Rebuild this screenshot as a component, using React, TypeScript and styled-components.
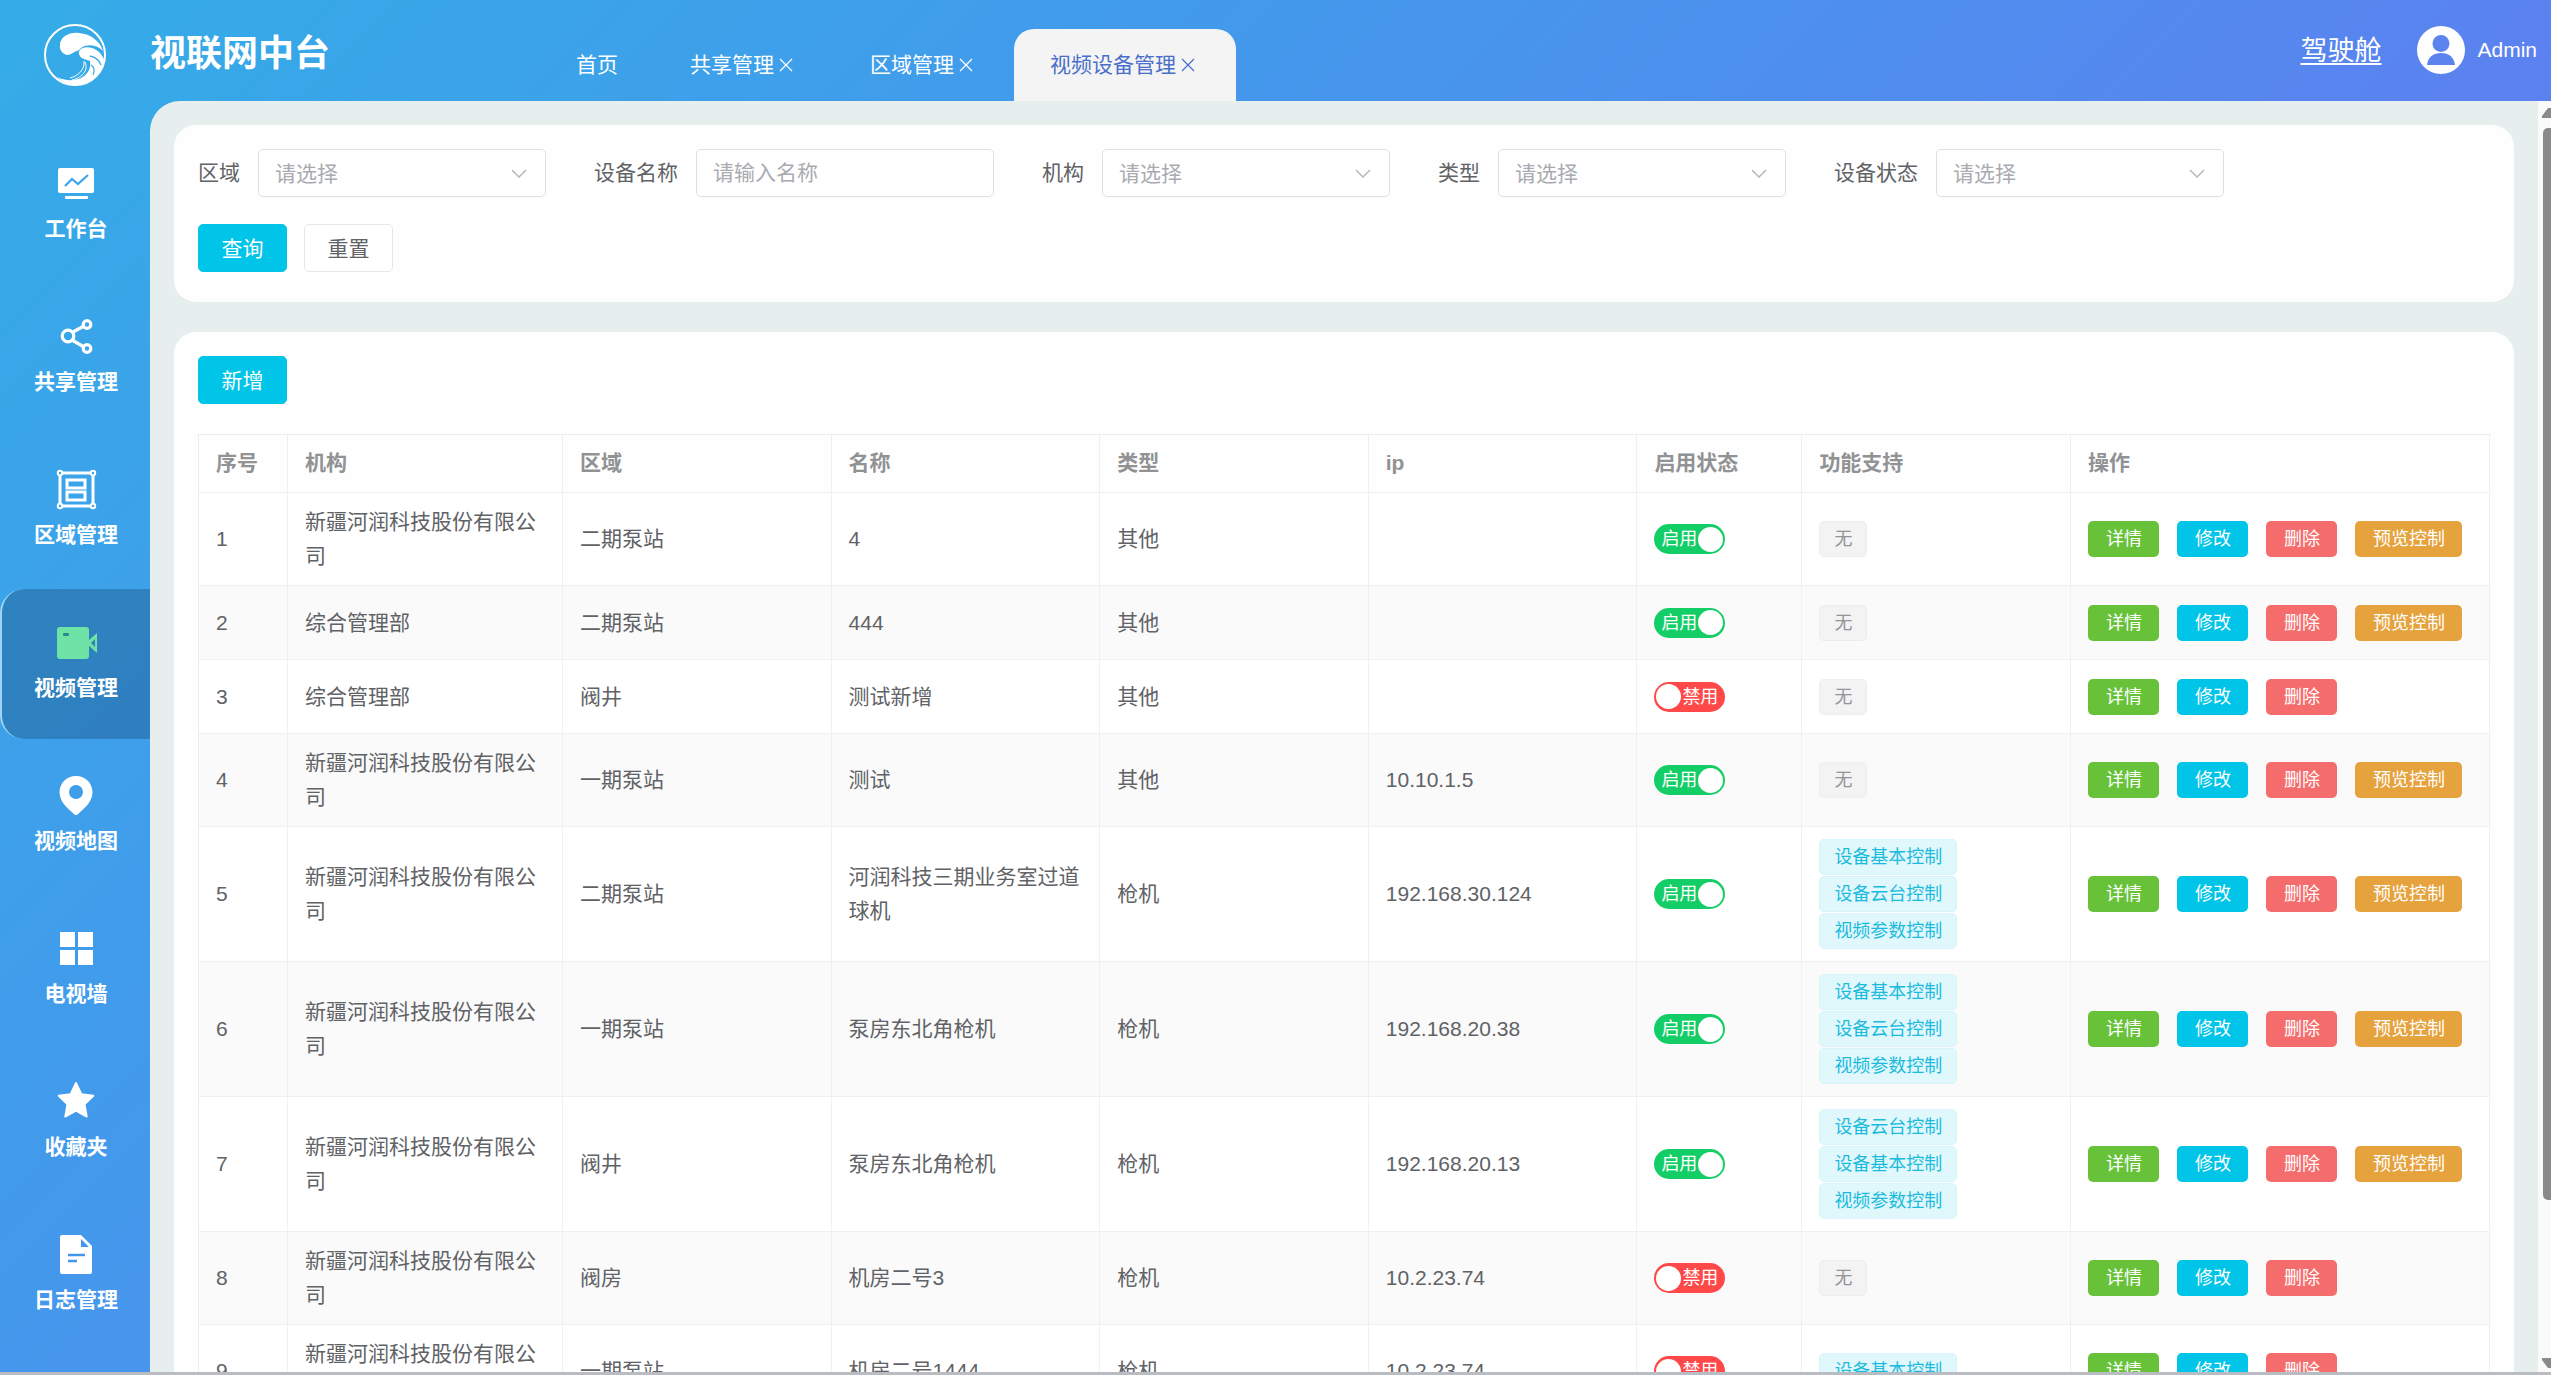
import React, { useState } from "react";
import styled, { createGlobalStyle, css } from "styled-components";

const Global = createGlobalStyle`
  *, *::before, *::after { box-sizing: border-box; }
  body {
    margin: 0;
    font-family: "Liberation Sans", "Noto Sans CJK SC", sans-serif;
    font-size: 21px;
    color: #606266;
  }
  button, input, select { font: inherit; }
`;

const Shell = styled.div`
  display: flex;
  flex-direction: column;
  height: 100vh;
  overflow: hidden;
  border-bottom: 3px solid #b9bcc2;
  background: linear-gradient(135deg, #34ace7 0%, #4498ec 34%, #5b82f0 66%, #6a74f2 100%);
`;

/* ---------- header ---------- */

const Header = styled.header`
  display: flex;
  flex: none;
  height: 101px;
  color: #fff;
`;

const Brand = styled.div`
  display: flex;
  flex: none;
  width: 540px;
  padding-top: 8px;
`;

const LogoBox = styled.div`
  display: flex;
  justify-content: center;
  width: 150px;
  padding-top: 15px;
`;

const Title = styled.h1`
  margin: 0;
  padding-top: 16px;
  font-size: 36px;
  line-height: 60px;
  font-weight: 700;
`;

const Tabs = styled.nav`
  display: flex;
  flex: 1;
  align-items: flex-end;
`;

const Tab = styled.div<{ $active?: boolean }>`
  display: flex;
  align-items: center;
  height: 72px;
  padding: 0 36px;
  border-radius: 20px 20px 0 0;
  ${(p) =>
    p.$active &&
    css`
      background: #f4f4f4;
      color: #4a6fcb;
    `}
`;

const TabLink = styled.a`
  color: inherit;
  text-decoration: none;
  line-height: 30px;
`;

const TabClose = styled.button`
  display: flex;
  align-items: center;
  justify-content: center;
  width: 24px;
  height: 24px;
  padding: 0;
  border: 0;
  background: none;
  color: inherit;
`;

const Account = styled.div`
  display: flex;
  align-items: center;
  height: 100px;
  padding-right: 14px;
`;

const Cockpit = styled.a`
  margin-right: 36px;
  padding-top: 2px;
  color: #fff;
  font-size: 27px;
  line-height: 36px;
  text-decoration: underline;
  text-decoration-thickness: 2px;
  text-underline-offset: 3px;
`;

const UserName = styled.span`
  margin-left: 12px;
`;

/* ---------- body ---------- */

const Body = styled.div`
  display: flex;
  flex: 1;
  min-height: 0;
`;

const Sidebar = styled.nav`
  display: flex;
  flex: none;
  flex-direction: column;
  gap: 3px;
  width: 150px;
  padding-top: 29px;
`;

const SideItem = styled.a<{ $active?: boolean }>`
  display: flex;
  flex: none;
  flex-direction: column;
  align-items: center;
  gap: 10px;
  height: 150px;
  padding-top: 34px;
  border-left: 2px solid transparent;
  color: #fff;
  font-weight: 700;
  line-height: 30px;
  text-decoration: none;
  ${(p) =>
    p.$active &&
    css`
      border-left-color: #9fd4f7;
      border-radius: 24px 0 0 24px;
      background: rgba(20, 68, 110, 0.34);
      svg { color: #6fe3a5; }
    `}
`;

const Main = styled.main`
  display: flex;
  flex: 1;
  min-width: 0;
  overflow: hidden;
  border-top-left-radius: 30px;
  background: #e6efed;
`;

const Scroller = styled.div`
  display: flex;
  flex: 1;
  flex-direction: column;
  gap: 30px;
  min-width: 0;
  padding: 24px 24px 0;
  overflow: hidden;
`;

const Card = styled.section`
  flex: none;
  padding: 24px 24px 30px;
  border-radius: 22px;
  background: #fefefe;
`;

const ScrollBar = styled.div`
  display: flex;
  flex: none;
  flex-direction: column;
  align-items: flex-end;
  width: 13px;
  padding: 6px 0 3px;
  background: #fafafa;
  color: #8a8a8a;
  svg { display: block; flex: none; }
`;

const Thumb = styled.div`
  flex: 1072 0 0;
  width: 8px;
  margin-top: 10px;
  border-radius: 5px 0 0 5px;
  background: #8a8a8a;
`;

const TrackRest = styled.div`
  flex: 158 0 0;
`;

/* ---------- filter form ---------- */

const Filters = styled.form`
  display: flex;
  flex-wrap: wrap;
  gap: 27px 48px;
`;

const Field = styled.div`
  display: flex;
  align-items: center;
  gap: 18px;
`;

const Label = styled.label`
  line-height: 48px;
`;

const controlBox = css`
  height: 48px;
  padding: 0 16px;
  border: 1px solid #dcdfe6;
  border-radius: 5px;
  background: #fff;
  color: #a9abb0;
  outline: none;
`;

const SelectWrap = styled.div`
  display: grid;
  align-items: center;
  width: 288px;
  > * { grid-area: 1 / 1; }
  svg { justify-self: end; margin-right: 19px; pointer-events: none; color: #b4b7bd; }
`;

const Select = styled.select`
  ${controlBox}
  width: 100%;
  appearance: none;
`;

const Input = styled.input`
  ${controlBox}
  width: 298px;
  &::placeholder { color: #a9abb0; opacity: 1; }
`;

const FormActions = styled.div`
  display: flex;
  flex-basis: 100%;
  gap: 17px;
`;

const Button = styled.button<{ $primary?: boolean }>`
  width: 89px;
  height: 48px;
  padding: 0 0 2px;
  border: 1px solid ${(p) => (p.$primary ? "#00c4e8" : "#e4e6ea")};
  border-radius: 5px;
  background: ${(p) => (p.$primary ? "#00c4e8" : "#fff")};
  color: ${(p) => (p.$primary ? "#fff" : "#606266")};
`;

/* ---------- table ---------- */

const Table = styled.table`
  width: 100%;
  margin-top: 30px;
  table-layout: fixed;
  border-collapse: separate;
  border-spacing: 0;
  border-top: 1px solid #ececee;
  border-left: 1px solid #ececee;
`;

const Col = styled.col<{ $w?: number }>`
  width: ${(p) => (p.$w ? p.$w + "px" : "auto")};
`;

const cell = css`
  padding: 12px 14px 12px 17px;
  border-right: 1px solid #f0f0f1;
  border-bottom: 1px solid #f0f0f1;
  line-height: 34px;
  text-align: left;
  vertical-align: middle;
`;

const Th = styled.th`
  ${cell}
  height: 58px;
  padding-top: 10px;
  color: #909294;
`;

const Td = styled.td`
  ${cell}
  height: 74px;
`;

const Row = styled.tr`
  background: #fff;
  &:nth-child(even) { background: #fafafa; }
`;

const TagList = styled.div`
  display: flex;
  flex-direction: column;
  align-items: flex-start;
  gap: 1px;
`;

const Tag = styled.span<{ $muted?: boolean }>`
  padding: 0 14px;
  border: 1px solid ${(p) => (p.$muted ? "#ededee" : "#d6f4f9")};
  border-radius: 5px;
  background: ${(p) => (p.$muted ? "#f3f3f4" : "#e0f8fc")};
  color: ${(p) => (p.$muted ? "#929497" : "#1cbbdd")};
  font-size: 18px;
  line-height: 34px;
`;

const Actions = styled.div`
  display: flex;
  gap: 18px;
`;

const tones = { green: "#67c23a", cyan: "#00c4e8", red: "#f56c6c", amber: "#e6a23c" };

const RowButton = styled.button<{ $tone: keyof typeof tones }>`
  height: 36px;
  padding: 0 17px 0 18px;
  border: 0;
  border-radius: 5px;
  background: ${(p) => tones[p.$tone]};
  color: #fff;
  font-size: 18px;
  line-height: 36px;
  white-space: nowrap;
`;

const SwitchLabel = styled.label<{ $on: boolean }>`
  display: flex;
  align-items: center;
  justify-content: space-between;
  flex-direction: ${(p) => (p.$on ? "row" : "row-reverse")};
  width: 71px;
  height: 30px;
  padding: ${(p) => (p.$on ? "0 2px 0 7px" : "0 7px 0 2px")};
  border-radius: 15px;
  background: ${(p) => (p.$on ? "#13ce66" : "#ff4949")};
  color: #fff;
  font-size: 18px;
  line-height: 30px;
`;

const SwitchInput = styled.input`
  appearance: none;
  flex: none;
  width: 25px;
  height: 25px;
  margin: 0;
  border-radius: 50%;
  background: #fff;
`;

/* ---------- drawings ---------- */

const Logo = () => (
  <svg width="64" height="64" viewBox="0 0 64 64" fill="none" aria-hidden="true">
    <circle cx="32" cy="32" r="30" stroke="#fff" strokeWidth="2" />
    <path
      fill="#fff"
      d="M17 22c0-8 9-13 19-12 12 1 21 8 24 18-5-5-11-7-18-5-4 1-5 4-8 5-4 1-6 4-10 4-4-1-8-5-7-10z"
    />
    <path
      fill="#fff"
      d="M36 31c-1-5 6-8 13-6 6 2 10 6 12 12-1 10-9 20-20 24-10 3-20 0-27-7 8 4 17 4 24 1 7-4 10-9 9-17l-3-1c-3-1-7-2-8-6z"
    />
    <path d="M47 33c5 1 9 4 11 9M48 42c3 2 4 6 2 10" stroke="#3aa9e8" strokeWidth="1.3" />
    <path d="M42 39c4 9-4 16-13 18M41 38c1 9-6 15-14 17" stroke="#fff" strokeWidth="1" />
  </svg>
);

const Avatar = () => (
  <svg width="48" height="48" viewBox="0 0 48 48" aria-hidden="true">
    <circle cx="24" cy="24" r="24" fill="#fff" />
    <circle cx="24" cy="17.500" r="8.500" fill="#5b84ef" />
    <path d="M10 39c1-8 6-12 14-12s13 4 14 12z" fill="#5b84ef" />
  </svg>
);

const Cross = () => (
  <svg width="14" height="14" viewBox="0 0 14 14" fill="none" stroke="currentColor" strokeWidth="1.3" aria-hidden="true">
    <path d="M1 1l12 12M13 1L1 13" />
  </svg>
);

const Chevron = () => (
  <svg width="16" height="9" viewBox="0 0 16 9" fill="none" stroke="currentColor" strokeWidth="1.500" aria-hidden="true">
    <path d="M1 1l7 7 7-7" />
  </svg>
);

const glyphs: Record<string, React.ReactNode> = {
  monitor: (
    <>
      <path
        fill="currentColor"
        d="M4 4h32a2 2 0 0 1 2 2v21a2 2 0 0 1-2 2H4a2 2 0 0 1-2-2V6a2 2 0 0 1 2-2z"
      />
      <path d="M9 22l7-7 6 5 10-9" stroke="#3ba5e8" strokeWidth="2.200" fill="none" />
      <rect x="9" y="32" width="23" height="3" rx="1" fill="currentColor" />
    </>
  ),
  share: (
    <g fill="none" stroke="currentColor" strokeWidth="3.200">
      <circle cx="12" cy="19" r="5.800" />
      <circle cx="31" cy="7.500" r="3.800" />
      <circle cx="31" cy="31.500" r="3.800" />
      <path d="M17 15l11-6M16 23l12 7" />
    </g>
  ),
  area: (
    <g fill="none" stroke="currentColor">
      <path d="M4 3h33v33H4z" strokeWidth="3" />
      <path d="M14 18h-3M11 10h18v8H11z" strokeWidth="3" />
      <path d="M11 22h18v8H11z" strokeWidth="3" />
      <g fill="#3f9fea" strokeWidth="2">
        <circle cx="4" cy="3" r="2.200" />
        <circle cx="37" cy="3" r="2.200" />
        <circle cx="4" cy="36" r="2.200" />
        <circle cx="37" cy="36" r="2.200" />
      </g>
    </g>
  ),
  video: (
    <>
      <rect x="1" y="4" width="32" height="32" rx="3" fill="currentColor" />
      <path d="M32 18l9-8v20l-9-8z" fill="currentColor" />
      <path d="M35 20l4-4v8z" fill="#3480bd" />
      <rect x="7" y="10" width="6" height="3" rx="1" fill="#2f8a8f" />
    </>
  ),
  pin: (
    <path
      fill="currentColor"
      fillRule="evenodd"
      d="M20 0c9.500 0 16.500 7 16.500 16.500C36.500 27 25 35 21.500 38.500q-1.500 1-3 0C15 35 3.500 27 3.500 16.500 3.500 7 10.500 0 20 0zm0 9a7 7 0 1 0 0 14 7 7 0 0 0 0-14z"
    />
  ),
  grid: <path fill="currentColor" d="M4 3h15v15H4zM22 3h15v15H22zM4 21h15v15H4zM22 21h15v15H22z" />,
  star: (
    <path
      fill="currentColor"
      stroke="currentColor"
      strokeWidth="2"
      strokeLinejoin="round"
      d="M20 1l5.300 11.200 12 1.600-8.800 8.500 2.200 12.200L20 28.600 9.300 34.500l2.200-12.200-8.800-8.500 12-1.600z"
    />
  ),
  doc: (
    <>
      <path fill="currentColor" d="M6 0h19l11 11v26a2 2 0 0 1-2 2H6a2 2 0 0 1-2-2V2a2 2 0 0 1 2-2z" />
      <path d="M25 4v8h8z" fill="#4496ec" />
      <path d="M12 20h17M12 26h9" stroke="#4496ec" strokeWidth="2.500" />
    </>
  ),
};

const SideIcon = ({ name }: { name: string }) => (
  <svg width="40" height="40" viewBox="0 0 40 40" overflow="visible" aria-hidden="true">
    {glyphs[name]}
  </svg>
);

/* ---------- data ---------- */

const menu = [
  { icon: "monitor", text: "工作台" },
  { icon: "share", text: "共享管理" },
  { icon: "area", text: "区域管理" },
  { icon: "video", text: "视频管理", active: true },
  { icon: "pin", text: "视频地图" },
  { icon: "grid", text: "电视墙" },
  { icon: "star", text: "收藏夹" },
  { icon: "doc", text: "日志管理" },
];

const tabs = [
  { text: "首页", fixed: true },
  { text: "共享管理" },
  { text: "区域管理" },
  { text: "视频设备管理", active: true },
];

const filters = [
  { id: "region", text: "区域" },
  { id: "name", text: "设备名称", hint: "请输入名称" },
  { id: "org", text: "机构" },
  { id: "type", text: "类型" },
  { id: "status", text: "设备状态" },
];

const columns = [
  { text: "序号", w: 89 },
  { text: "机构", w: 275 },
  { text: "区域" },
  { text: "名称" },
  { text: "类型" },
  { text: "ip" },
  { text: "启用状态", w: 165 },
  { text: "功能支持" },
  { text: "操作", w: 419 },
];

const HERUN = "新疆河润科技股份有限公司";
const ADMIN_DEPT = "综合管理部";
const BASIC = "设备基本控制";
const PTZ = "设备云台控制";
const VIDEO = "视频参数控制";

type Device = {
  org: string;
  area: string;
  name: string;
  type: string;
  ip: string;
  on: boolean;
  features: string[];
};

const devices: Device[] = [
  { org: HERUN, area: "二期泵站", name: "4", type: "其他", ip: "", on: true, features: [] },
  { org: ADMIN_DEPT, area: "二期泵站", name: "444", type: "其他", ip: "", on: true, features: [] },
  { org: ADMIN_DEPT, area: "阀井", name: "测试新增", type: "其他", ip: "", on: false, features: [] },
  { org: HERUN, area: "一期泵站", name: "测试", type: "其他", ip: "10.10.1.5", on: true, features: [] },
  { org: HERUN, area: "二期泵站", name: "河润科技三期业务室过道球机", type: "枪机", ip: "192.168.30.124", on: true, features: [BASIC, PTZ, VIDEO] },
  { org: HERUN, area: "一期泵站", name: "泵房东北角枪机", type: "枪机", ip: "192.168.20.38", on: true, features: [BASIC, PTZ, VIDEO] },
  { org: HERUN, area: "阀井", name: "泵房东北角枪机", type: "枪机", ip: "192.168.20.13", on: true, features: [PTZ, BASIC, VIDEO] },
  { org: HERUN, area: "阀房", name: "机房二号3", type: "枪机", ip: "10.2.23.74", on: false, features: [] },
  { org: HERUN, area: "一期泵站", name: "机房二号1444", type: "枪机", ip: "10.2.23.74", on: false, features: [BASIC] },
];

const DeviceRow = ({ device, index }: { device: Device; index: number }) => {
  const [on, setOn] = useState(device.on);
  return (
    <Row>
      <Td>{index + 1}</Td>
      <Td>{device.org}</Td>
      <Td>{device.area}</Td>
      <Td>{device.name}</Td>
      <Td>{device.type}</Td>
      <Td>{device.ip}</Td>
      <Td>
        <SwitchLabel $on={on}>
          {on ? "启用" : "禁用"}
          <SwitchInput type="checkbox" role="switch" checked={on} onChange={() => setOn(!on)} />
        </SwitchLabel>
      </Td>
      <Td>
        <TagList>
          {device.features.length ? device.features.map((f) => <Tag key={f}>{f}</Tag>) : <Tag $muted>无</Tag>}
        </TagList>
      </Td>
      <Td>
        <Actions>
          <RowButton $tone="green">详情</RowButton>
          <RowButton $tone="cyan">修改</RowButton>
          <RowButton $tone="red">删除</RowButton>
          {on && <RowButton $tone="amber">预览控制</RowButton>}
        </Actions>
      </Td>
    </Row>
  );
};

export default function App() {
  return (
    <>
      <Global />
      <Shell>
        <Header>
          <Brand>
            <LogoBox>
              <Logo />
            </LogoBox>
            <Title>视联网中台</Title>
          </Brand>
          <Tabs>
            {tabs.map((t) => (
              <Tab key={t.text} $active={t.active}>
                <TabLink href="#">{t.text}</TabLink>
                {!t.fixed && (
                  <TabClose aria-label={"关闭" + t.text}>
                    <Cross />
                  </TabClose>
                )}
              </Tab>
            ))}
          </Tabs>
          <Account>
            <Cockpit href="#">驾驶舱</Cockpit>
            <Avatar />
            <UserName>Admin</UserName>
          </Account>
        </Header>
        <Body>
          <Sidebar>
            {menu.map((m) => (
              <SideItem key={m.text} href="#" $active={m.active}>
                <SideIcon name={m.icon} />
                {m.text}
              </SideItem>
            ))}
          </Sidebar>
          <Main>
            <Scroller>
              <Card>
                <Filters onSubmit={(e) => e.preventDefault()}>
                  {filters.map((f) => (
                    <Field key={f.id}>
                      <Label htmlFor={f.id}>{f.text}</Label>
                      {f.hint ? (
                        <Input id={f.id} placeholder={f.hint} />
                      ) : (
                        <SelectWrap>
                          <Select id={f.id}>
                            <option>请选择</option>
                          </Select>
                          <Chevron />
                        </SelectWrap>
                      )}
                    </Field>
                  ))}
                  <FormActions>
                    <Button type="submit" $primary>
                      查询
                    </Button>
                    <Button type="reset">重置</Button>
                  </FormActions>
                </Filters>
              </Card>
              <Card>
                <Button $primary>新增</Button>
                <Table>
                  <colgroup>
                    {columns.map((c) => (
                      <Col key={c.text} $w={c.w} />
                    ))}
                  </colgroup>
                  <thead>
                    <tr>
                      {columns.map((c) => (
                        <Th key={c.text}>{c.text}</Th>
                      ))}
                    </tr>
                  </thead>
                  <tbody>
                    {devices.map((d, i) => (
                      <DeviceRow key={i} device={d} index={i} />
                    ))}
                  </tbody>
                </Table>
              </Card>
            </Scroller>
            <ScrollBar aria-hidden="true">
              <svg width="9" height="11" viewBox="0 0 9 11">
                <path d="M0 11V9l6-8h3v10z" fill="currentColor" />
              </svg>
              <Thumb />
              <TrackRest />
              <svg width="9" height="11" viewBox="0 0 9 11">
                <path d="M0 0v2l6 8h3V0z" fill="currentColor" />
              </svg>
            </ScrollBar>
          </Main>
        </Body>
      </Shell>
    </>
  );
}
